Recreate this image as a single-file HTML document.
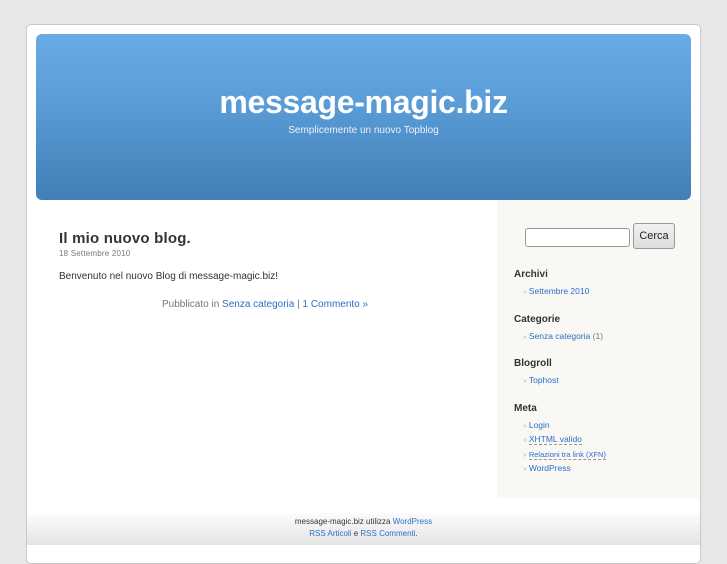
<!DOCTYPE html>
<html><head><meta charset="utf-8"><style>
*{margin:0;padding:0;box-sizing:border-box}
body{width:727px;height:545px;overflow:hidden;background:#e7e7e7;font-family:"Liberation Sans",sans-serif;position:relative}
#page{position:absolute;left:26px;top:24px;width:675px;height:540px;background:#fff;border:1px solid #c9c9c9;border-radius:5px}
#header{position:absolute;left:36px;top:34px;width:655px;height:166px;border-radius:6px;background:linear-gradient(#69abe7,#5a9dd8 40%,#417fb6);text-align:center;color:#fff}
#header h1{font-size:32px;font-weight:bold;margin-top:50px;letter-spacing:-0.3px;line-height:36px}
#header p{font-size:10px;margin-top:5px;color:#eef}
#side{position:absolute;left:497px;top:200px;width:202px;height:298px;background:#f9f8f4}
a{color:#2970c7;text-decoration:none}
.post{position:absolute;left:59px;top:230px;width:360px}
.post h2{font-size:15px;color:#333;letter-spacing:0.2px}
.date{font-size:8px;color:#777;margin-top:2px;letter-spacing:.2px}
.entry{font-size:10px;color:#333;margin-top:13px}
.meta{position:absolute;left:162px;top:299px;font-size:10px;color:#777}
.s{position:absolute;left:17px;font-size:10px;font-weight:bold;color:#333;line-height:12px;white-space:nowrap}
.l{position:absolute;left:26px;font-size:8.5px;color:#777;line-height:10px;white-space:nowrap}
.l:before{content:"» ";color:#bbb;font-size:7px}
.inp{position:absolute;left:28px;top:28px;width:105px;height:19px;border:1px solid #999;border-radius:3px;background:#fff}
.btn{position:absolute;left:136px;top:23px;width:42px;height:26px;border:1px solid #999;border-radius:3px;background:linear-gradient(#f1f1f1,#ddd);font-size:11px;text-align:center;line-height:24px;color:#222}
#footer{position:absolute;left:27px;top:513px;width:673px;height:32px;background:linear-gradient(#fcfcfc,#e4e4e4);text-align:center;font-size:8px;color:#333;line-height:12px;padding-top:3px}
</style></head><body>
<div id="page"></div>
<div id="header"><h1>message-magic.biz</h1><p>Semplicemente un nuovo Topblog</p></div>
<div class="post"><h2>Il mio nuovo blog.</h2><div class="date">18 Settembre 2010</div><div class="entry">Benvenuto nel nuovo Blog di message-magic.biz!</div></div>
<div class="meta">Pubblicato in <a>Senza categoria</a> | <a>1 Commento »</a></div>
<div id="side">
<div class="inp"></div><div class="btn">Cerca</div>
<div class="s" style="top:69px">Archivi</div>
<div class="l" style="top:86px"><a>Settembre 2010</a></div>
<div class="s" style="top:114px">Categorie</div>
<div class="l" style="top:131px"><a>Senza categoria</a> (1)</div>
<div class="s" style="top:158px">Blogroll</div>
<div class="l" style="top:175px"><a>Tophost</a></div>
<div class="s" style="top:203px">Meta</div>
<div class="l" style="top:220px"><a>Login</a></div>
<div class="l" style="top:234px"><a style="border-bottom:1px dashed #999">XHTML valido</a></div>
<div class="l" style="top:249px"><a style="border-bottom:1px dashed #999;font-size:7.5px">Relazioni tra link (XFN)</a></div>
<div class="l" style="top:263px"><a>WordPress</a></div>
</div>
<div id="footer">message-magic.biz utilizza <a>WordPress</a><br><a>RSS Articoli</a> e <a>RSS Commenti</a>.</div>
</body></html>
